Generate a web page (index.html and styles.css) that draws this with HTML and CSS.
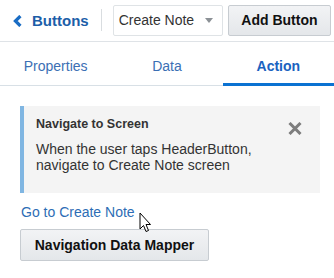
FILE: index.html
```html
<!DOCTYPE html>
<html>
<head>
<meta charset="utf-8">
<link rel="stylesheet" href="styles.css">
</head>
<body>
<div class="page">
  <header class="header">
    <a class="back">
      <svg class="chev" width="9" height="12" viewBox="0 0 9 12"><path d="M7.4 1 L2.4 6 L7.4 11" fill="none" stroke="#1a6dc4" stroke-width="3.2" stroke-linejoin="miter"/></svg>
      <span class="back-text">Buttons</span>
    </a>
    <span class="sep"></span>
    <div class="select">
      <span class="select-text">Create Note</span>
      <span class="caret"></span>
    </div>
    <button class="btn add">Add Button</button>
  </header>
  <nav class="tabs">
    <div class="tab">Properties</div>
    <div class="tab">Data</div>
    <div class="tab active">Action</div>
  </nav>
  <section class="content">
    <div class="note">
      <div class="note-body">
        <div class="note-title">Navigate to Screen</div>
        <div class="note-text">When the user taps HeaderButton, navigate to Create Note screen</div>
      </div>
      <svg class="close" width="14" height="13" viewBox="0 0 14 13"><path d="M1.5 1 L12.5 12 M12.5 1 L1.5 12" stroke="#7d7d7d" stroke-width="3"/></svg>
    </div>
    <a class="link">Go to Create Note</a>
    <div><button class="btn mapper">Navigation Data Mapper</button></div>
    <svg class="cursor" width="13" height="21" viewBox="0 0 13 21"><path d="M1 1 L1 17 L4.5 13.5 L7 19.5 L9.5 18.5 L7 12.5 L11.5 12.5 Z" fill="#fff" stroke="#000" stroke-width="1" stroke-linejoin="round"/></svg>
  </section>
</div>
</body>
</html>
```
FILE: styles.css
```css
* { box-sizing: border-box; }
body {
  margin: 0;
  background: #fff;
  font-family: "Liberation Sans", Arial, sans-serif;
  color: #333;
}
.page {
  width: 334px;
  height: 278px;
  position: relative;
  overflow: hidden;
}
.header {
  height: 42px;
  border-bottom: 1px solid #dfe3e7;
  display: flex;
  align-items: center;
  padding: 0 3px 1px 13px;
}
.back {
  display: flex;
  align-items: center;
  gap: 10px;
  color: #1c5ea8;
  font-weight: bold;
  font-size: 15px;
}
.chev { display: block; margin-top: 1px; }
.sep {
  width: 1px;
  height: 22px;
  background: #d9dde0;
  margin-left: 12px;
}
.select {
  margin-left: 11px;
  width: 111px;
  height: 31px;
  border: 1px solid #dfe3e6;
  border-radius: 2px;
  background: #fff;
  display: flex;
  align-items: center;
  padding: 0 9px 0 5px;
  font-size: 14px;
  color: #333;
}
.select-text { flex: 1; }
.caret {
  width: 0;
  height: 0;
  border-left: 4.5px solid transparent;
  border-right: 4.5px solid transparent;
  border-top: 5px solid #8c9196;
}
.btn {
  font-family: "Liberation Sans", Arial, sans-serif;
  font-weight: bold;
  font-size: 14px;
  color: #111;
  background: linear-gradient(#f2f3f5, #e4e7ea);
  border: 1px solid #c7ccd1;
  border-radius: 2px;
  height: 31px;
  padding: 0;
}
.add {
  margin-left: 5px;
  width: 104px;
}
.tabs {
  display: grid;
  grid-template-columns: 1fr 1fr 1fr;
  height: 44px;
  border-bottom: 1px solid #d8e0e6;
}
.tab {
  display: flex;
  align-items: center;
  justify-content: center;
  font-size: 14px;
  color: #3b6fb4;
  padding-top: 5px;
}
.tab.active {
  color: #1a62c0;
  font-weight: bold;
  border-bottom: 3px solid #0b72d2;
  margin-bottom: -1px;
  padding-top: 7px;
}
.content {
  padding: 20px 14px 0 20px;
}
.note {
  height: 87px;
  background: #f4f4f4;
  border-left: 4px solid #80b6e2;
  display: flex;
  padding: 10px 18px 0 12px;
}
.note-body { flex: 1; }
.note-title {
  font-size: 12.5px;
  font-weight: bold;
  color: #333;
  line-height: 16px;
}
.note-text {
  margin-top: 9px;
  font-size: 14px;
  line-height: 16px;
  color: #333;
  width: 230px;
}
.close { display: block; margin-top: 6px; }
.link {
  display: block;
  margin-top: 11px;
  margin-left: 1px;
  font-size: 14px;
  line-height: 16px;
  color: #2d6db5;
}
.mapper {
  margin-top: 9px;
  width: 189px;
  height: 32px;
}
.cursor {
  position: absolute;
  left: 139px;
  top: 212px;
}
```
